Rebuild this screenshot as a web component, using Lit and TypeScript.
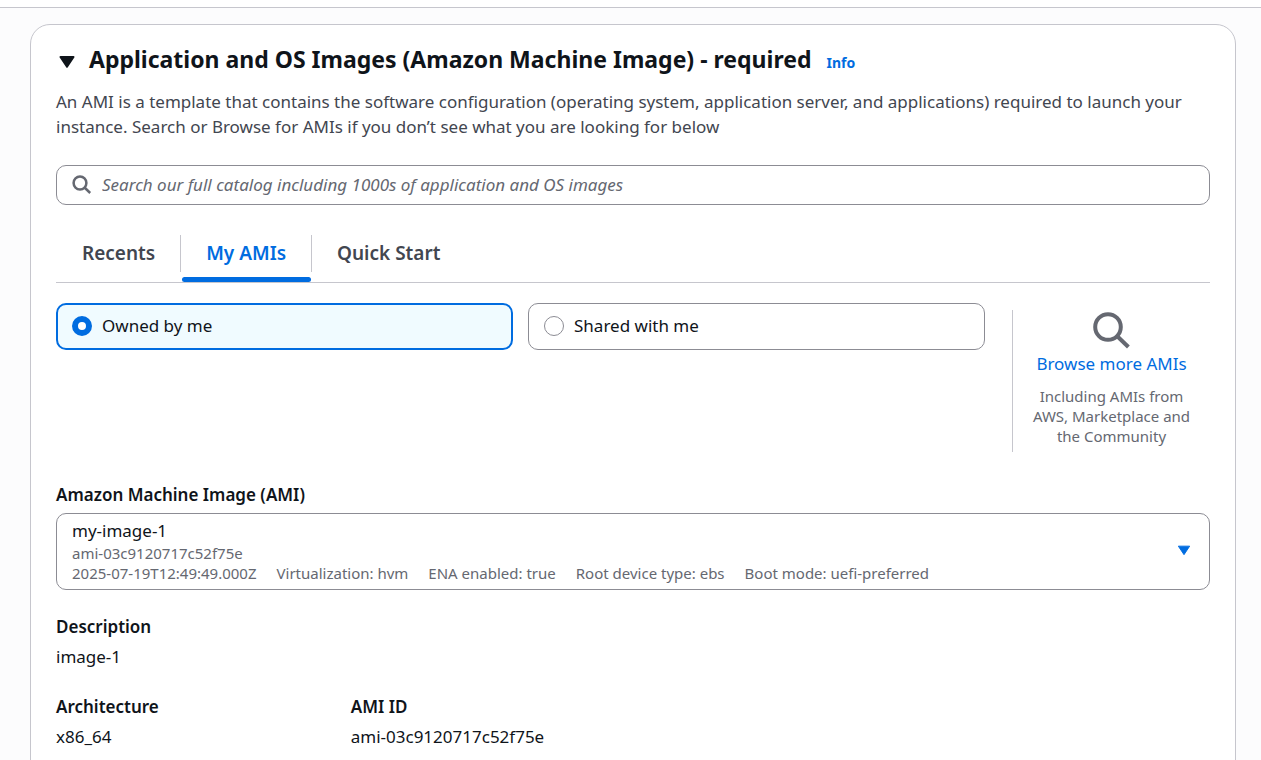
import { LitElement, html, css, svg } from "lit";
import { customElement, state } from "lit/decorators.js";

const searchIcon = html`<svg class="search-icon" viewBox="0 0 20 20" aria-hidden="true">
  ${svg`<circle cx="8" cy="8" r="6.4"></circle><path d="M12.5 12.5l5.7 5.5"></path>`}
</svg>`;

const TABS = ["Recents", "My AMIs", "Quick Start"];
const SOURCES = ["Owned by me", "Shared with me"];

@customElement("app-root")
export class AppRoot extends LitElement {
  @state() private tab = "My AMIs";
  @state() private source = "Owned by me";
  @state() private open = true;

  static styles = css`
    :host {
      display: block;
      height: 100vh;
      overflow: hidden;
      background: #fcfcfd;
      color: #0f141a;
      font: 17px/25px "Noto Sans", "Open Sans", sans-serif;
    }
    * { box-sizing: border-box; }
    button, input, select { font: inherit; color: inherit; margin: 0; }
    button { border: 0; background: none; padding: 0; cursor: pointer; }
    h2, p, dl, dd, fieldset { margin: 0; padding: 0; border: 0; min-width: 0; }
    a { color: #006ce0; text-decoration: none; }
    .topbar { height: 8px; background: #fff; border-bottom: 1px solid #c6c6cd; }
    .card {
      margin: 16px 25px 0 30px;
      padding: 16px 25px 40px;
      background: #fff;
      border: 1px solid #c6c6cd;
      border-radius: 20px;
      min-height: 800px;
    }
    .header { display: flex; align-items: baseline; gap: 15px; }
    .title { font-size: 23px; line-height: 36px; font-weight: 700; }
    .toggle { display: flex; align-items: baseline; gap: 14px; padding-left: 3px; text-align: left; }
    .caret { width: 16px; height: 12px; fill: currentColor; stroke: currentColor; stroke-width: 2; stroke-linejoin: round; }
    .toggle .caret { margin-bottom: 2px; }
    .info { font-size: 14px; line-height: 20px; font-weight: 700; }
    .intro { margin-top: 12px; color: #424650; }
    .search {
      display: flex;
      align-items: center;
      gap: 10px;
      height: 40px;
      margin-top: 26px;
      padding: 0 15px;
      border: 1px solid #8c8c94;
      border-radius: 10px;
    }
    .search-icon { width: 20px; height: 20px; flex: none; fill: none; stroke: #656871; stroke-width: 2.5; }
    .search input { flex: 1; min-width: 0; border: 0; padding: 0 0 2px; outline: 0; background: none; }
    .search input::placeholder { color: #656871; font-style: italic; opacity: 1; }
    .tabs { display: flex; margin-top: 25px; border-bottom: 1px solid #c6c6cd; }
    .tab { display: flex; flex-direction: column; padding-top: 5px; font-size: 19px; font-weight: 600; color: #424650; }
    .tab-label { padding: 6px 25px; border-left: 1px solid #c6c6cd; }
    .tab:first-child .tab-label { border-color: transparent; }
    .marker { height: 5px; margin: 5px 0 0 2px; border-radius: 3px; }
    .tab.active { color: #006ce0; }
    .tab.active .marker { background: #006ce0; }
    .pick { display: flex; gap: 27px; margin-top: 20px; }
    .tiles { flex: 1; display: grid; grid-template-columns: 1fr 1fr; gap: 15px; align-items: start; }
    .tile {
      display: flex;
      align-items: center;
      gap: 10px;
      height: 47px;
      padding: 0 15px 2px;
      border: 1px solid #8c8c94;
      border-radius: 10px;
      cursor: pointer;
    }
    .tile.active { border: 2px solid #006ce0; padding: 0 14px 2px; background: #f0fbff; }
    .radio { appearance: none; width: 20px; height: 20px; border: 1px solid #8c8c94; border-radius: 50%; background: #fff; }
    .radio:checked { border: 6px solid #006ce0; }
    .browse {
      width: 198px;
      margin-top: 7px;
      padding: 1px 18px 6px;
      border-left: 1px solid #c6c6cd;
      display: flex;
      flex-direction: column;
      align-items: center;
      text-align: center;
    }
    .browse .search-icon { width: 40px; height: 40px; stroke-width: 2; }
    .note { margin-top: 10px; color: #656871; }
    .small { font-size: 15px; line-height: 20px; }
    .label { font-weight: 600; display: block; }
    .field { margin-top: 30px; }
    .select {
      position: relative;
      display: flex;
      align-items: center;
      justify-content: space-between;
      margin-top: 6px;
      padding: 4px 18px 6px 15px;
      border: 1px solid #8c8c94;
      border-radius: 10px;
    }
    .select select { position: absolute; inset: 0; width: 100%; height: 100%; opacity: 0; cursor: pointer; }
    .select .caret { width: 14px; height: 11px; color: #006ce0; stroke-width: 1; stroke-linejoin: miter; }
    .meta { color: #656871; display: flex; flex-wrap: wrap; column-gap: 20px; }
    .details { display: grid; grid-template-columns: repeat(4, 1fr); gap: 25px; margin-top: 24px; }
    .details dt { font-weight: 600; }
    .details dd { margin-top: 5px; }
    .wide { grid-column: 1 / -1; }
  `;

  private caret() {
    return html`<svg class="caret" viewBox="0 0 16 12" aria-hidden="true"><path d="M1.5 1h13L8 10.8z"></path></svg>`;
  }

  private body() {
    return html`
      <p class="intro">
        An AMI is a template that contains the software configuration (operating system, application server, and
        applications) required to launch your instance. Search or Browse for AMIs if you don’t see what you are looking
        for below
      </p>
      <div class="search">
        ${searchIcon}
        <input type="search" aria-label="Search images"
          placeholder="Search our full catalog including 1000s of application and OS images" />
      </div>
      <div class="tabs" role="tablist">
        ${TABS.map((t) => html`
          <button class="tab ${t === this.tab ? "active" : ""}" role="tab" aria-selected=${t === this.tab}
            @click=${() => (this.tab = t)}>
            <span class="tab-label">${t}</span><span class="marker"></span>
          </button>`)}
      </div>
      <div class="pick">
        <fieldset class="tiles" aria-label="Image owner">
          ${SOURCES.map((s) => html`
            <label class="tile ${s === this.source ? "active" : ""}">
              <input class="radio" type="radio" name="source" .checked=${s === this.source}
                @change=${() => (this.source = s)} />
              <span>${s}</span>
            </label>`)}
        </fieldset>
        <aside class="browse">
          ${searchIcon}
          <a href="#browse">Browse more AMIs</a>
          <p class="note small">Including AMIs from AWS, Marketplace and the Community</p>
        </aside>
      </div>
      <div class="field">
        <label class="label" for="ami">Amazon Machine Image (AMI)</label>
        <div class="select">
          <div>
            <div>my-image-1</div>
            <div class="meta small">ami-03c9120717c52f75e</div>
            <div class="meta small">
              <span>2025-07-19T12:49:49.000Z</span><span>Virtualization: hvm</span><span>ENA enabled: true</span>
              <span>Root device type: ebs</span><span>Boot mode: uefi-preferred</span>
            </div>
          </div>
          ${this.caret()}
          <select id="ami"><option>my-image-1</option></select>
        </div>
      </div>
      <dl class="details">
        <div class="wide"><dt>Description</dt><dd>image-1</dd></div>
        <div><dt>Architecture</dt><dd>x86_64</dd></div>
        <div><dt>AMI ID</dt><dd>ami-03c9120717c52f75e</dd></div>
      </dl>`;
  }

  render() {
    return html`
      <div class="topbar"></div>
      <section class="card">
        <div class="header">
          <h2 class="title">
            <button class="toggle" aria-expanded=${this.open} @click=${() => (this.open = !this.open)}>
              ${this.caret()}<span>Application and OS Images (Amazon Machine Image) - required</span>
            </button>
          </h2>
          <a class="info" href="#info">Info</a>
        </div>
        ${this.open ? this.body() : null}
      </section>`;
  }
}
